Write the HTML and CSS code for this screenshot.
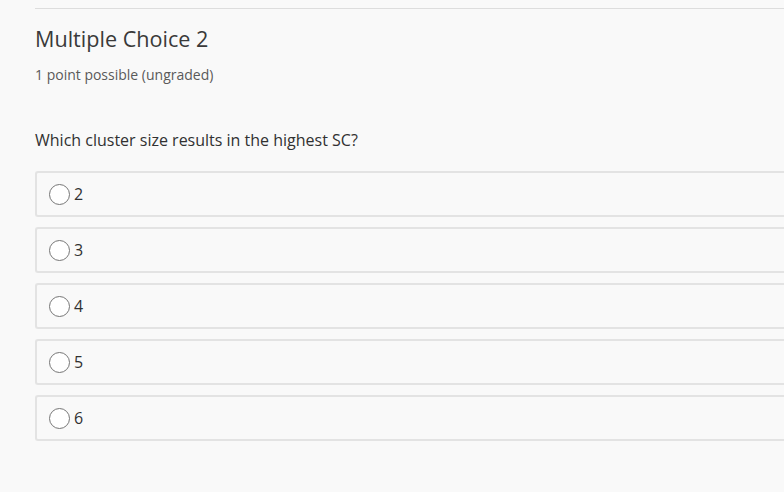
FILE: index.html
```html
<!DOCTYPE html>
<html>
<head>
<meta charset="utf-8">
<link rel="stylesheet" href="styles.css">
</head>
<body>
<div class="problem">
  <div class="rule"></div>
  <h2 class="title">Multiple Choice 2</h2>
  <div class="progress">1 point possible (ungraded)</div>
  <p class="question">Which cluster size results in the highest SC?</p>
  <div class="choices">
    <label class="choice"><span class="radio"></span><span class="val">2</span></label>
    <label class="choice"><span class="radio"></span><span class="val">3</span></label>
    <label class="choice"><span class="radio"></span><span class="val">4</span></label>
    <label class="choice"><span class="radio"></span><span class="val">5</span></label>
    <label class="choice"><span class="radio"></span><span class="val">6</span></label>
  </div>
</div>
</body>
</html>
```
FILE: styles.css
```css
html, body {
  margin: 0;
  padding: 0;
  background: #f9f9f9;
}
body {
  font-family: "Open Sans", "Liberation Sans", sans-serif;
  color: #313131;
  overflow: hidden;
}
.problem {
  padding: 8px 0 0 35px;
}
.rule {
  border-top: 1px solid #dddddd;
}
.title {
  margin: 14px 0 0;
  font-size: 21.6px;
  font-weight: 400;
  line-height: 32px;
  color: #3a3a3a;
}
.progress {
  margin-top: 11px;
  font-size: 14px;
  line-height: 18px;
  color: #5a5a5a;
}
.question {
  margin: 45px 0 0;
  font-size: 16px;
  line-height: 22px;
  color: #313131;
}
.choices {
  margin-top: 20px;
  display: flex;
  flex-direction: column;
  gap: 10px;
}
.choice {
  display: flex;
  align-items: center;
  height: 42px;
  border: 2px solid #e3e3e3;
  border-right: none;
  border-radius: 3px 0 0 3px;
  padding-left: 12px;
  font-size: 16px;
}
.radio {
  width: 19px;
  height: 19px;
  border: 1px solid #767676;
  border-radius: 50%;
  background: #ffffff;
  flex: none;
}
.val {
  margin-left: 4px;
  line-height: 22px;
}
```
